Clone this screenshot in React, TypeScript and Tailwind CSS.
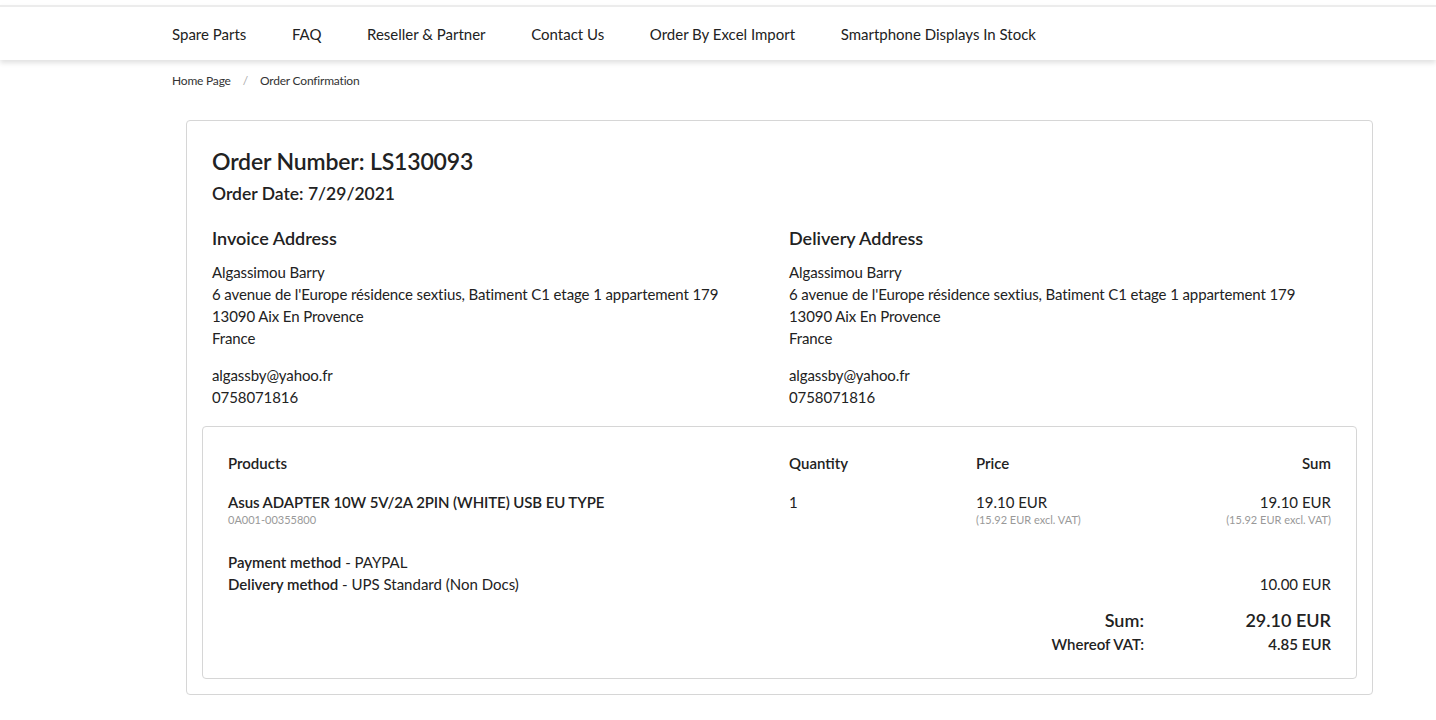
const NAV_LINKS = ['Spare Parts', 'FAQ', 'Reseller & Partner', 'Contact Us', 'Order By Excel Import', 'Smartphone Displays In Stock'];

const ADDRESS = {
  name: 'Algassimou Barry',
  street: "6 avenue de l'Europe résidence sextius, Batiment C1 etage 1 appartement 179",
  city: '13090 Aix En Provence',
  country: 'France',
  email: 'algassby@yahoo.fr',
  phone: '0758071816',
};

function AddressBlock({ title }: { title: string }) {
  return (
    <div>
      <h3 className="text-[18px] font-semibold leading-[24px] text-[#222]">{title}</h3>
      <div className="mt-[11px] text-[15px] leading-[22px] tracking-[-0.1px] text-[#222]">
        <div>{ADDRESS.name}</div>
        <div>{ADDRESS.street}</div>
        <div>{ADDRESS.city}</div>
        <div>{ADDRESS.country}</div>
        <div className="mt-[15px]">{ADDRESS.email}</div>
        <div>{ADDRESS.phone}</div>
      </div>
    </div>
  );
}

export default function App() {
  return (
    <div className="min-h-[720px] bg-white font-['Lato','Liberation_Sans',sans-serif] text-[#222]">
      {/* Top nav */}
      <div className="h-[5px]" />
      <div className="border-t-2 border-[#ececec] bg-white shadow-[0_3px_5px_rgba(0,0,0,0.12)]">
        <nav className="flex h-[53px] items-center gap-[45.6px] pl-[172px] pt-[2px] text-[15px] text-[#222]">
          {NAV_LINKS.map(link => (
            <a key={link} href="#" className="whitespace-nowrap">{link}</a>
          ))}
        </nav>
      </div>

      {/* Breadcrumb */}
      <div className="flex items-center gap-[12px] pl-[172px] pt-[12px] text-[12px] leading-[18px] tracking-[-0.2px] text-[#333]">
        <span>Home Page</span>
        <span className="text-[#aaa]">/</span>
        <span>Order Confirmation</span>
      </div>

      {/* Order card */}
      <div className="ml-[186px] mr-[63px] mt-[30px] rounded-[4px] border border-[#d6d6d6] px-[25px] pb-[15px] pt-[25px]">
        <h1 className="text-[23px] font-semibold leading-[30px] tracking-[-0.15px] text-[#222]">Order Number: LS130093</h1>
        <h2 className="mt-[6px] text-[17.5px] font-semibold leading-[24px] text-[#222]">Order Date: 7/29/2021</h2>

        <div className="mt-[20px] grid grid-cols-[577px_1fr]">
          <AddressBlock title="Invoice Address" />
          <AddressBlock title="Delivery Address" />
        </div>

        {/* Products box */}
        <div className="-mx-[10px] mt-[18px] rounded-[4px] border border-[#d6d6d6] px-[25px] pb-[22px] pt-[26px]">
          <div className="grid grid-cols-[561px_187px_1fr_auto] text-[15px] font-semibold leading-[20px]">
            <div>Products</div>
            <div>Quantity</div>
            <div>Price</div>
            <div className="text-right">Sum</div>
          </div>

          <div className="mt-[19px] grid grid-cols-[561px_187px_1fr_auto] text-[15px] leading-[20px]">
            <div>
              <div className="font-semibold tracking-[-0.1px]">Asus ADAPTER 10W 5V/2A 2PIN (WHITE) USB EU TYPE</div>
              <div className="text-[11px] leading-[16px] text-[#999]">0A001-00355800</div>
            </div>
            <div>1</div>
            <div>
              <div>19.10 EUR</div>
              <div className="text-[11px] leading-[16px] text-[#999]">(15.92 EUR excl. VAT)</div>
            </div>
            <div className="text-right">
              <div>19.10 EUR</div>
              <div className="text-[11px] leading-[16px] text-[#999]">(15.92 EUR excl. VAT)</div>
            </div>
          </div>

          <div className="mt-[23px] flex items-end justify-between text-[15px] leading-[22px]">
            <div>
              <div><span className="font-semibold">Payment method</span> - PAYPAL</div>
              <div><span className="font-semibold">Delivery method</span> - UPS Standard (Non Docs)</div>
            </div>
            <div>10.00 EUR</div>
          </div>

          <div className="mt-[13px] grid grid-cols-[1fr_auto] justify-items-end">
            <div className="grid grid-cols-[auto_187px] items-baseline text-right">
              <div className="text-[18px] font-semibold leading-[24px]">Sum:</div>
              <div className="text-[18px] font-semibold leading-[24px]">29.10 EUR</div>
              <div className="text-[15px] font-semibold leading-[24px]">Whereof VAT:</div>
              <div className="text-[15px] font-semibold leading-[24px]">4.85 EUR</div>
            </div>
          </div>
        </div>
      </div>
    </div>
  );
}
